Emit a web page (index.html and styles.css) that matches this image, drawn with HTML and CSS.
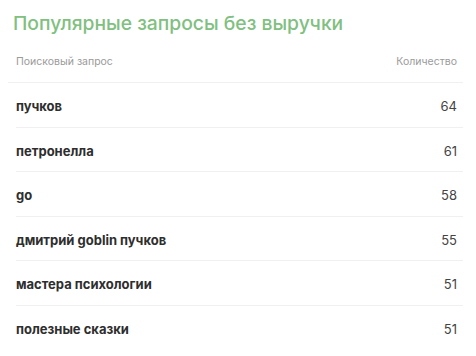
FILE: index.html
```html
<!DOCTYPE html>
<html lang="ru">
<head>
  <meta charset="UTF-8" />
  <meta name="viewport" content="width=device-width, initial-scale=1.0"/>
  <title>Популярные запросы без выручки</title>
  <link rel="stylesheet" href="styles.css">
</head>
<body>
  <section class="panel">
    <h2 class="panel-title">Популярные запросы без выручки</h2>

    <div class="queries">
      <div class="queries-head">
        <span>Поисковый запрос</span>
        <span>Количество</span>
      </div>
      <div class="query-row"><span class="query">пучков</span><span class="count">64</span></div>
      <div class="query-row"><span class="query">петронелла</span><span class="count">61</span></div>
      <div class="query-row"><span class="query">go</span><span class="count">58</span></div>
      <div class="query-row"><span class="query">дмитрий goblin пучков</span><span class="count">55</span></div>
      <div class="query-row"><span class="query">мастера психологии</span><span class="count">51</span></div>
      <div class="query-row"><span class="query">полезные сказки</span><span class="count">51</span></div>
    </div>
  </section>
</body>
</html>
```

FILE: styles.css
```css
:root {
  --green: #80c080;
  --muted: #9a9a9a;
  --text: #2e2e2e;
  --line: #f0f0f0;
}
*, *::before, *::after { box-sizing: border-box; margin: 0; padding: 0; }
body { font-family: Inter, "Noto Sans", sans-serif; background: #fff; color: var(--text); }

.panel { padding: 11px 13px 0 8px; }
.panel-title { font-size: 19.3px; line-height: 24px; font-weight: 500; color: var(--green); padding-left: 5px; }

.queries { display: flex; flex-direction: column; }
.queries-head { display: flex; justify-content: space-between; padding: 20px 6px 13px 8px; font-size: 10.5px; line-height: 14px; color: var(--muted); border-bottom: 1px solid var(--line); }
.query-row { display: flex; justify-content: space-between; align-items: center; margin-left: 8px; padding: 16px 6px 12px 0; font-size: 13px; line-height: 15.5px; border-bottom: 1px solid var(--line); }
.query-row:last-child { border-bottom: none; }
.query { font-weight: 700; color: var(--text); }
.count { color: #444; }
```
